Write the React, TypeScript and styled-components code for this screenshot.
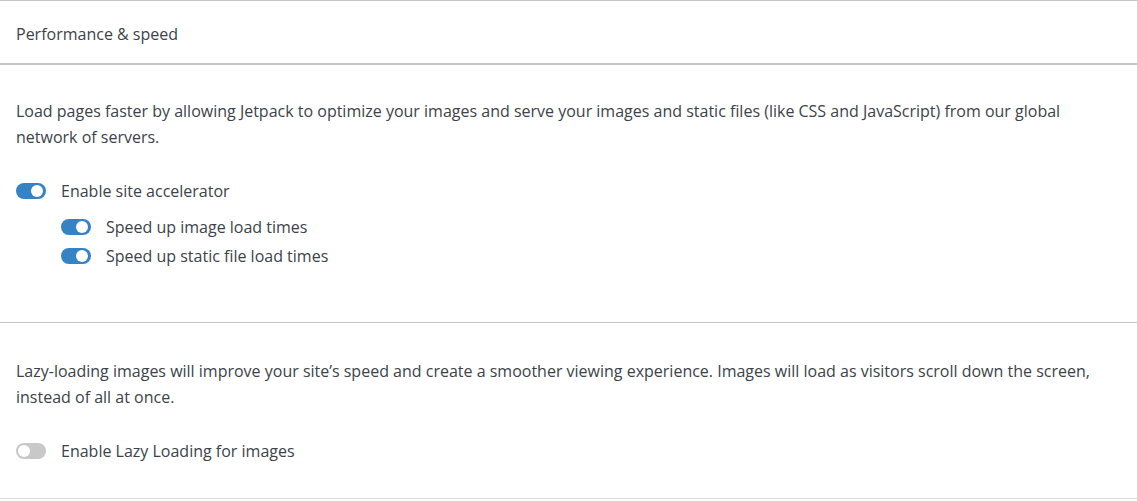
import styled, { createGlobalStyle } from 'styled-components'
import { useState } from 'react'

const GlobalStyle = createGlobalStyle`
    html, body {
        margin: 0;
        padding: 0;
        background: #fff;
    }
    body {
        font-family: "Open Sans", "Noto Sans", sans-serif;
        font-size: 16px;
        color: #3c434a;
    }
`;

const Card = styled.div`
    width: 1137px;
    background: #fff;
    border-top: 1px solid #c3c4c7;
    border-bottom: 1px solid #dcdcde;
    box-shadow: 0 1px 0 #e4e4e6;
`;

const Header = styled.div`
    height: 64px;
    padding: 3px 16px 0;
    box-sizing: border-box;
    display: flex;
    align-items: center;
    border-bottom: 2px solid #c3c4c7;
`;

const Section = styled.div<{ $top: number, $bottom: number, $last?: boolean }>`
    padding: ${p => p.$top}px 28px ${p => p.$bottom}px 16px;
    border-bottom: ${p => p.$last ? 'none' : '1px solid #c3c4c7'};
`;

const Text = styled.p`
    margin: 0 0 28px;
    line-height: 26px;
`;

const Row = styled.label`
    display: flex;
    align-items: center;
    gap: 15px;
    height: 26px;
    cursor: pointer;
`;

const SubList = styled.div`
    margin-top: 10px;
    padding-left: 45px;
    display: flex;
    flex-direction: column;
    gap: 3px;
`;

const Track = styled.span<{ $on: boolean }>`
    position: relative;
    flex: none;
    width: 30px;
    height: 16px;
    border-radius: 8px;
    background: ${p => p.$on ? '#3582c4' : '#c8c8c8'};
`;

const Knob = styled.span<{ $on: boolean }>`
    position: absolute;
    top: 2px;
    left: ${p => p.$on ? '15px' : '2px'};
    width: 12px;
    height: 12px;
    border-radius: 50%;
    background: #fff;
`;

function Toggle({ label, initial }: { label: string, initial: boolean }) {
    const [on, setOn] = useState(initial)
    return (
        <Row onClick={() => setOn(!on)}>
            <Track $on={on}><Knob $on={on} /></Track>
            {label}
        </Row>
    )
}

export default function App() {
    return (
        <>
            <GlobalStyle />
            <Card>
                <Header>Performance &amp; speed</Header>
                <Section $top={33} $bottom={53}>
                    <Text>
                        Load pages faster by allowing Jetpack to optimize your images and serve your images and static files (like CSS and JavaScript) from our global network of servers.
                    </Text>
                    <Toggle label="Enable site accelerator" initial={true} />
                    <SubList>
                        <Toggle label="Speed up image load times" initial={true} />
                        <Toggle label="Speed up static file load times" initial={true} />
                    </SubList>
                </Section>
                <Section $top={35} $bottom={34} $last>
                    <Text>
                        Lazy-loading images will improve your site’s speed and create a smoother viewing experience. Images will load as visitors scroll down the screen, instead of all at once.
                    </Text>
                    <Toggle label="Enable Lazy Loading for images" initial={false} />
                </Section>
            </Card>
        </>
    )
}
